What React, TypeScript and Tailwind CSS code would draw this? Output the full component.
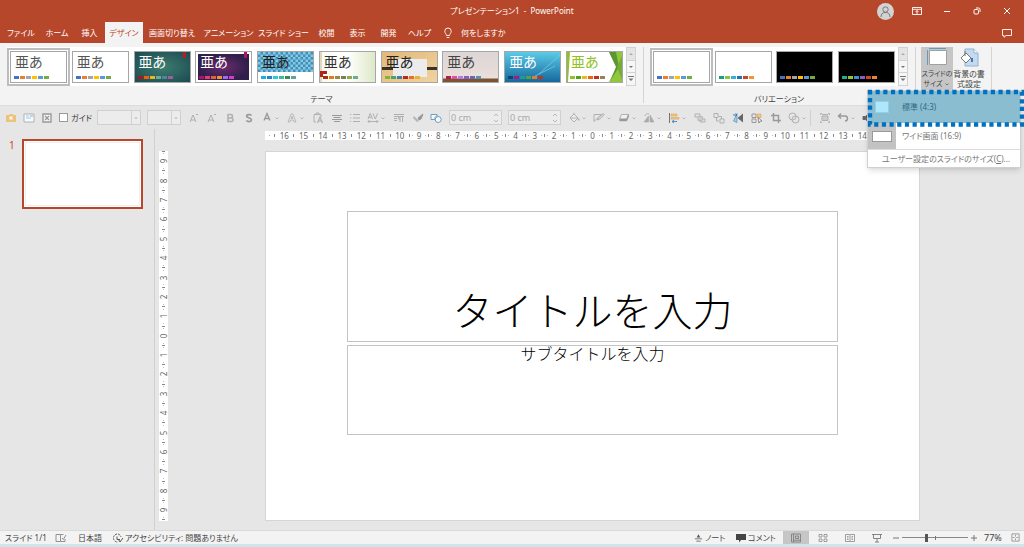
import type { ReactNode } from "react";
import clsx from "clsx";

const OFFICE = ["bg-[#4472c4]", "bg-[#ed7d31]", "bg-[#a5a5a5]", "bg-[#ffc000]", "bg-[#5b9bd5]", "bg-[#70ad47]"];

const tabs = [
  { label: "ファイル", width: "w-[38px]" },
  { label: "ホーム", width: "w-[34px]" },
  { label: "挿入", width: "w-[31px]" },
  { label: "デザイン", width: "w-[38px]", active: true },
  { label: "画面切り替え", width: "w-[58px]" },
  { label: "アニメーション", width: "w-[55px]" },
  { label: "スライド ショー", width: "w-[55px]" },
  { label: "校閲", width: "w-[31px]" },
  { label: "表示", width: "w-[31px]" },
  { label: "開発", width: "w-[31px]" },
  { label: "ヘルプ", width: "w-[31px]" },
];

interface Theme {
  name: string;
  text: string;
  bg: string;
  art?: ReactNode;
  colors: string[];
  selected?: boolean;
}

const themes: Theme[] = [
  { name: "Office テーマ", text: "text-[#555]", bg: "bg-white", colors: OFFICE, selected: true },
  { name: "Office", text: "text-[#555]", bg: "bg-white", colors: OFFICE },
  {
    name: "イオン",
    text: "text-white",
    bg: "bg-radial from-[#3f7d70] to-[#1b4a50]",
    art: <rect x="48" width="3" height="6" fill="#b31f24" />,
    colors: ["bg-[#b01513]", "bg-[#ea6312]", "bg-[#e6b729]", "bg-[#6aac90]", "bg-[#54849a]", "bg-[#9e5e9b]"],
  },
  {
    name: "イオン ボードルーム",
    text: "text-white",
    bg: "bg-white",
    art: (
      <>
        <defs>
          <radialGradient id="board">
            <stop offset="0" stopColor="#6d2a6e" />
            <stop offset="1" stopColor="#2f1f4b" />
          </radialGradient>
        </defs>
        <rect x="2" y="2" width="51" height="26" fill="url(#board)" />
        <rect x="48" width="3" height="6" fill="#b31166" />
      </>
    ),
    colors: ["bg-[#b31166]", "bg-[#e33d6f]", "bg-[#e45f3c]", "bg-[#e9943a]", "bg-[#9b6bf2]", "bg-[#d53dd0]"],
  },
  {
    name: "インテグラル",
    text: "text-[#222]",
    bg: "bg-white",
    art: (
      <>
        <defs>
          <pattern id="check" width="5" height="5" patternUnits="userSpaceOnUse">
            <rect width="5" height="5" fill="#3b93bd" />
            <path d="M0 0h2.5v2.5H0zM2.5 2.5H5V5H2.5z" fill="#8cc6df" />
          </pattern>
        </defs>
        <rect width="56" height="20" fill="url(#check)" />
      </>
    ),
    colors: ["bg-[#1cade4]", "bg-[#2683c6]", "bg-[#27ced7]", "bg-[#42ba97]", "bg-[#3e8853]", "bg-[#62a39f]"],
  },
  {
    name: "オーガニック",
    text: "text-[#333]",
    bg: "bg-linear-to-r from-[#fbfaf3] via-white to-[#dfe8c8]",
    art: (
      <>
        <path d="M1 0v30" stroke="#c5b48c" />
        <path d="M0 19h7v3H3v3H0z" fill="#b02318" />
      </>
    ),
    colors: ["bg-[#a53010]", "bg-[#de7e18]", "bg-[#9f8351]", "bg-[#728653]", "bg-[#92aa4c]", "bg-[#6aac91]"],
  },
  {
    name: "ギャラリー",
    text: "text-[#222]",
    bg: "bg-linear-to-br from-[#e3b878] to-[#f0d3a0]",
    art: (
      <>
        <rect y="15" width="56" height="3" fill="#3a332c" />
        <rect x="11" y="7" width="34" height="18" fill="#ececec" />
      </>
    ),
    colors: ["bg-[#83b23d]", "bg-[#4aa26c]", "bg-[#3f81a6]", "bg-[#b02b22]", "bg-[#e2732b]", "bg-[#e8b13a]"],
  },
  {
    name: "木版活字",
    text: "text-[#444]",
    bg: "bg-linear-to-b from-[#dcd6d4] to-[#ebe0dd]",
    art: (
      <>
        <rect y="27" width="56" height="3" fill="#7b5433" />
        <rect y="26" width="56" height="1" fill="#b09a88" />
      </>
    ),
    colors: ["bg-[#b31d4c]", "bg-[#dd4fa0]", "bg-[#b478f2]", "bg-[#7f62c0]", "bg-[#6b66b0]", "bg-[#5a90ad]"],
  },
  {
    name: "回路",
    text: "text-white",
    bg: "bg-linear-to-b from-[#5ccbe8] to-[#14699c]",
    art: <path d="M34 22 55 3M30 24 50 14" stroke="#7fd0e8" strokeWidth=".7" fill="none" />,
    colors: ["bg-[#16406f]", "bg-[#a31c84]", "bg-[#1c9d8f]", "bg-[#5c9f3c]", "bg-[#e57b2c]", "bg-[#b5352a]"],
  },
  {
    name: "ファセット",
    text: "text-[#90c226]",
    bg: "bg-white",
    art: (
      <>
        <path d="M0 0h3L1 30H0z" fill="#90c226" />
        <path d="M42 0h13v30H42l8-15z" fill="#90c83c" />
        <path d="M42 0h7l3 15-9 14 6-14z" fill="#5d9436" />
        <path d="M50 15 55 4v24z" fill="#74ad35" />
      </>
    ),
    colors: ["bg-[#90c226]", "bg-[#54a021]", "bg-[#e6b91e]", "bg-[#e76618]", "bg-[#c42f1a]", "bg-[#918655]"],
  },
];

const variants: Theme[] = [
  { name: "白 1", text: "", bg: "bg-white", colors: OFFICE, selected: true },
  {
    name: "白 2",
    text: "",
    bg: "bg-white",
    colors: ["bg-[#1b9e84]", "bg-[#8cc63e]", "bg-[#3bb0d6]", "bg-[#2374a8]", "bg-[#c8472b]", "bg-[#f0963a]"],
  },
  { name: "黒 1", text: "", bg: "bg-black", colors: OFFICE },
  {
    name: "黒 2",
    text: "",
    bg: "bg-black",
    colors: ["bg-[#1fae90]", "bg-[#8cc63e]", "bg-[#3a93d0]", "bg-[#8a5cc4]", "bg-[#c8472b]", "bg-[#ef8132]"],
  },
];

const ThemeButton = ({ theme, sample }: { theme: Theme; sample?: boolean }) => (
  <button
    type="button"
    aria-label={theme.name}
    className={clsx(
      "relative flex h-8 w-[57px] flex-col border border-[#a6a6a6] text-left",
      theme.bg,
      theme.selected && "outline-2 outline-offset-1 outline-[#bdbdbd]"
    )}
  >
    {theme.art && (
      <svg viewBox="0 0 55 30" preserveAspectRatio="none" className="absolute inset-0 h-full w-full">
        {theme.art}
      </svg>
    )}
    <span className={clsx("relative block h-6 pl-1 text-[14px] leading-5", theme.text)}>{sample && "亜あ"}</span>
    <span className="relative flex gap-px pl-[3px]">
      {theme.colors.map((c) => (
        <span key={c} className={clsx("h-[3px] w-[5px]", c)} />
      ))}
    </span>
  </button>
);

const GalleryScroll = () => (
  <div className="flex h-[39px] w-[10px] flex-col border border-[#d2d2d2] bg-[#f6f6f6]">
    <button type="button" aria-label="前の行" className="flex flex-1 items-center justify-center bg-[#e4e4e4]">
      <svg viewBox="0 0 6 6" className="size-[6px]"><path d="M1 4 3 2l2 2z" fill="#aaa" /></svg>
    </button>
    <button type="button" aria-label="次の行" className="flex flex-1 items-center justify-center border-y border-[#d2d2d2]">
      <svg viewBox="0 0 6 6" className="size-[6px]"><path d="M1 2h4L3 4z" fill="#777" /></svg>
    </button>
    <button type="button" aria-label="その他" className="flex flex-1 items-center justify-center">
      <svg viewBox="0 0 6 6" className="size-[6px]"><path d="M0 .5h6" stroke="#777" /><path d="M.5 2.500h5L3 5z" fill="#777" /></svg>
    </button>
  </div>
);

const Separator = () => <div className="h-14 w-px bg-[#d4d4d4]" />;

/* 12x12 の小さなアイコン */
const icons: Record<string, ReactNode> = {
  folder: <><path d="M1 3h3l1-1h3v1h3v7H1z" fill="#edc27c" stroke="none" /><path d="M6 4v4M4 6h4M4.600 4.600l2.800 2.800M7.400 4.600 4.600 7.400" stroke="#fff" strokeWidth=".8" /></>,
  slide: <><path d="M1 2h10v8H1z" fill="#f7fbfd" /><path d="M3 4h3M3 6h5" stroke="#9cc8e4" /><path d="M7 3h3v2H7z" fill="#b5d8ee" stroke="none" /></>,
  close: <><path d="M2 2h8v8H2z" fill="#f4f4f4" stroke="#999" strokeWidth="1.400" /><path d="m4 4 4 4M8 4 4 8" stroke="#999" strokeWidth="1.300" /></>,
  grow: <><path d="m2 10 3-7 3 7M3 8h4" /><path d="m8 3 1-1 1 1" /></>,
  shrink: <><path d="m2 10 3-7 3 7M3 8h4" /><path d="m8 2 1 1 1-1" /></>,
  bold: <path d="M4 2.500h2.500q2 0 2 1.700T6.500 6H4zM4 6h3q2 0 2 1.900T7 9.500H4z" strokeWidth="1.500" />,
  shadow: <path d="M8.500 3.500C7 2 3.500 2.200 3.700 4.200S8.700 6 8.500 8 4.800 10 3.300 8.500" strokeWidth="1.700" stroke="#999" />,
  fontColor: <path d="m3 8.500 3-7 3 7M4 6.500h4" strokeWidth="1.300" stroke="#999" />,
  outlineA: <path d="m2 10 3-8h2l3 8H8L7.400 8H4.600L4 10zM5.200 6.500h1.600L6 4z" strokeWidth=".8" />,
  paste: <><path d="M4 10H2V2.500h7V5M4 2.500V1h3v1.500" /><path d="m5.500 11 2.500-6 2.500 6M6.500 9h3" strokeWidth="1.200" /></>,
  align: <path d="M1 3.500h10M2.500 5.500h7M1 7.500h10M3 9.500h6" strokeWidth="1.100" stroke="#999" />,
  list: <path d="M1 2.500h1.200M4 2.500h7M1 6h1.200M4 6h7M1 9.500h1.200M4 9.500h7" />,
  spacing: <><path d="m1 7 2.200-5.500L5.500 7M2 5.300h2.500M6 1.500 8.300 7l2.200-5.500" /><path d="M1 9.500h10M2.500 8 1 9.500 2.500 11M9.500 8 11 9.500 9.500 11" /></>,
  direction: <><path d="M1 2.500h10M1 4.500h5M1 6.500h3M1 8.500h3" /><path d="M7 10V4.500M9.500 10V4.500M11 4.500H7a1.500 1.500 0 0 0 0 3" /></>,
  brush: <><path d="m6 6 5-4-2 5-2 1z" fill="#999" stroke="#999" /><path d="m2 4 5 5-2 1-4-4z" fill="#b5b5b5" stroke="none" /></>,
  shapes: <><path d="M1 2.500h6v5H1z" fill="#f4f9fc" stroke="#6e9fbd" /><path d="M4.500 6 7 3.500 9.500 6 7 8.500z" fill="#f4f9fc" stroke="#6e9fbd" /><circle cx="8.200" cy="7.500" r="3" fill="#f4f9fc" stroke="#6e9fbd" /></>,
  bucket: <><path d="m2 6 4-4 4 4-4 4zM6 2V.8M2.500 6h7" fill="#eee" /><path d="M10.700 6.500v2" strokeWidth="1.600" /></>,
  pen: <><path d="M8 2.500H1v7L9 2" /><path d="m4.500 8 .7-2L10 1.500l1.200 1L6.500 7.300z" fill="#ddd" /></>,
  effect: <><path d="M3.500 2.500h7L8.700 7h-7z" fill="#f1f1f1" /><path d="M1.700 7v2h7L10.500 5V2.500L8.700 7z" fill="#999" stroke="#999" strokeWidth=".5" /></>,
  rotate: <><path d="M5.500 10V4L1 10zM7 10V3l4 7z" fill="#aaa" stroke="#aaa" strokeWidth=".6" /><path d="M2 4a3 3 0 0 1 4-2" /></>,
  alignObj: <><path d="M1.500 1v10" stroke="#777" /><path d="M3 2h6v2H3z" fill="#f2c681" stroke="#d9a55a" strokeWidth=".6" /><path d="M3 5.500h8v1.600H3z" fill="#f2c681" stroke="#d9a55a" strokeWidth=".6" /><path d="M9 9.500H4M6 8 4 9.500 6 11" stroke="#4b94c6" /></>,
  forward: <><path d="M1 2h5v3H1zM6 7h5v3H6z" /><path d="M4 4.500h4.500v4H4z" fill="#ccc" stroke="#bbb" /></>,
  group: <><path d="M1 1.500h4v4H1zM7 7h4v4H7z" /><path d="M5.500 4.500h3V7M3.500 6v3H6" /></>,
  flip: <><path d="M11 1.500v9L5.500 6z" fill="#666" stroke="none" /><path d="M5 1.500v9L1.500 9z" fill="#a7cbe3" stroke="#4b94c6" strokeWidth=".7" /><path d="M1 3h4M3.500 1.500 5 3 3.500 4.500" stroke="#2f7fb8" /></>,
  select: <><path d="M1 2h4v3.500H1zM1 7h4v3.500H1z" stroke="#999" /><path d="M6 2h4v3.500H6z" fill="#f2c681" stroke="#d9a55a" strokeWidth=".6" /><path d="m7 5.500 4 3.500-2 .2L8 11z" fill="#fff" stroke="#777" strokeWidth=".8" /></>,
  crop: <path d="M3.500 1v7.500H11M1 3.500h7.500V11" strokeWidth="1.400" stroke="#999" />,
  merge: <><circle cx="4.500" cy="4.500" r="3.500" /><circle cx="7.500" cy="7.500" r="3.500" /></>,
  fit: <><path d="M1.500 3V1.500H3M9 1.500h1.500V3M10.500 9v1.500H9M3 10.500H1.500V9" /><path d="M3 4h6v4.500H3z" fill="#ccc" /><path d="M3 2.500h6" /></>,
  undo: <path d="M4 1.500 1.500 4 4 6.500M1.500 4H8q2.500 0 2.500 2.500T8 9" strokeWidth="1.400" stroke="#999" />,
  sound: <path d="M1 4.500h2.500L7 1.500v9L3.500 7.500H1zM9 4q1 2 0 4" fill="#666" stroke="#666" />,
};

const Chevron = () => (
  <svg viewBox="0 0 8 8" className="size-2 shrink-0" fill="none" stroke="#b8b8b8">
    <path d="M2.500 3.500 4 5l1.500-1.500" />
  </svg>
);

const Tool = ({ icon, label, menu, wide }: { icon: string; label: string; menu?: boolean; wide?: boolean }) => (
  <button
    type="button"
    aria-label={label}
    className={clsx("flex h-4 shrink-0 items-center justify-center", menu ? "w-[25px]" : wide ? "w-[19px]" : "w-[18px]")}
  >
    <svg viewBox="0 0 12 12" className="size-3 shrink-0" fill="none" stroke="#b0b0b0">
      {icons[icon]}
    </svg>
    {menu && <Chevron />}
  </button>
);

const Combo = ({ label, width }: { label: string; width: string }) => (
  <div className={clsx("relative h-[15px] shrink-0 border border-[#d0d0d0] bg-[#ececec]", width)}>
    <select aria-label={label} className="h-full w-full appearance-none" defaultValue="">
      <option value=""></option>
    </select>
    <span className="pointer-events-none absolute inset-y-0 right-0 flex items-center border-l border-[#d0d0d0]">
      <svg viewBox="0 0 8 8" className="size-2"><path d="M2.500 3.500h3L4 5z" fill="#aaa" /></svg>
    </span>
  </div>
);

const Spin = ({ label }: { label: string }) => (
  <div className="flex h-[15px] w-[53px] shrink-0 items-center border border-[#d0d0d0] bg-[#ececec] pr-[2px]">
    <input aria-label={label} defaultValue="0 cm" className="w-full min-w-0 pl-px text-[9px] text-[#a8a8a8]" />
    <svg viewBox="0 0 6 12" className="h-3 w-[6px] shrink-0" fill="none" stroke="#b8b8b8">
      <path d="m1 4 2-2 2 2M1 8l2 2 2-2" />
    </svg>
  </div>
);

const range = (n: number) => Array.from({ length: n * 2 + 1 }, (_, i) => Math.abs(n - i));

const HorizontalRuler = () => (
  <div className="flex h-[9px] items-center overflow-hidden bg-white text-[8px] leading-none text-[#666]">
    <span className="flex flex-[1_1_0] justify-center"><i className="size-px bg-[#aaa]" /></span>
    <i className="h-[3px] w-px bg-[#888]" />
    {range(16).map((n, i) => (
      <span key={i} className="contents">
        <span className="flex flex-[2_2_0] items-center justify-around">
          {n < 10 && <i className="size-px bg-[#bbb]" />}
          {n}
          {n < 10 && <i className="size-px bg-[#bbb]" />}
        </span>
        <i className="h-[3px] w-px bg-[#888]" />
      </span>
    ))}
    <span className="flex-[1_1_0]" />
  </div>
);

const VerticalRuler = () => (
  <div className="flex w-[9px] flex-col items-center overflow-hidden bg-white text-[8px] leading-none text-[#666]">
    <i className="h-px w-[3px] bg-[#888]" />
    {range(9).map((n, i) => (
      <span key={i} className="contents">
        <span className="flex flex-[1_1_0] flex-col items-center justify-around">
          <i className="size-px bg-[#bbb]" />
          <span className="flex size-2 -rotate-90 items-center justify-center">{n}</span>
          <i className="size-px bg-[#bbb]" />
        </span>
        <i className="h-px w-[3px] bg-[#888]" />
      </span>
    ))}
  </div>
);

const TitleBar = () => (
  <div className="grid h-[22px] grid-cols-[1fr_auto_1fr] items-center">
    <span />
    <h1 className="whitespace-pre">プレゼンテーション1  -  PowerPoint</h1>
    <div className="flex items-center justify-end pr-[2px]">
      <button type="button" aria-label="アカウント" className="mr-2 size-[17px] rounded-full bg-[#d3d3d3]">
        <svg viewBox="0 0 17 17" fill="none" stroke="#777"><circle cx="8.500" cy="6.500" r="2.700" /><path d="M4 14q0-4.500 4.500-4.500T13 14" /></svg>
      </button>
      <button type="button" aria-label="リボンの表示オプション" className="flex w-[30px] justify-center">
        <svg viewBox="0 0 10 10" className="size-[10px]" fill="none" stroke="#fff"><path d="M.5 1.500h9v7h-9zM.5 3.300h9M5 8V4.500M3.500 6 5 4.500 6.500 6" strokeWidth=".9" /></svg>
      </button>
      <button type="button" aria-label="最小化" className="flex w-[30px] justify-center">
        <svg viewBox="0 0 10 10" className="size-[10px]" stroke="#fff"><path d="M2 5.500h6" /></svg>
      </button>
      <button type="button" aria-label="元に戻す (縮小)" className="flex w-[30px] justify-center">
        <svg viewBox="0 0 10 10" className="size-[10px]" fill="none" stroke="#fff"><rect x="2" y="3.500" width="4.500" height="4.500" rx="1" /><path d="M4 2h2.500Q8 2 8 3.500V6" /></svg>
      </button>
      <button type="button" aria-label="閉じる" className="flex w-[30px] justify-center">
        <svg viewBox="0 0 10 10" className="size-[10px]" stroke="#fff"><path d="m2 2 6 6M8 2 2 8" /></svg>
      </button>
    </div>
  </div>
);

const TabBar = () => (
  <nav className="flex h-[21px] items-stretch pl-[2px]">
    {tabs.map((tab) => (
      <button
        key={tab.label}
        type="button"
        className={clsx("shrink-0 whitespace-nowrap text-center", tab.width, tab.active && "bg-[#f3f3f3] text-[#b7472a]")}
      >
        {tab.label}
      </button>
    ))}
    <button type="button" className="ml-2 flex items-center gap-2 whitespace-nowrap">
      <svg viewBox="0 0 10 12" className="h-3 w-[10px]" fill="none" stroke="#fff"><path d="M3.500 8.500C3.500 7 1.800 6.300 1.800 4.200a3.200 3.200 0 0 1 6.400 0C8.200 6.300 6.500 7 6.500 8.500zM3.700 10.500h2.600" strokeWidth=".9" /></svg>
      何をしますか
    </button>
    <button type="button" aria-label="コメント" className="ml-auto mr-3">
      <svg viewBox="0 0 10 10" className="size-[10px]" fill="none" stroke="#fff"><path d="M.5 1.500h9v6H4L2 9.300V7.500H.5z" strokeWidth=".9" /></svg>
    </button>
  </nav>
);

const SizeMenu = () => (
  <div className="absolute top-[43px] -left-[54px] z-10 w-[154px] border border-[#d0d0d0] bg-white text-[#777] shadow-md">
    <button type="button" className="flex h-[32px] w-full items-center bg-[#8abdd0] text-[#2f6a80]">
      <span className="flex w-7 justify-center"><i className="h-3 w-[14px] border border-[#8fd0e8] bg-[#aee6fb]" /></span>
      <span className="pl-[6px]">標準 (4:3)</span>
    </button>
    <button type="button" className="flex h-[26px] w-full items-center">
      <span className="flex h-full w-7 items-center justify-center bg-[#c3c3c3]"><i className="h-[11px] w-5 border border-[#999] bg-white" /></span>
      <span className="pl-[6px]">ワイド画面 (16:9)</span>
    </button>
    <button type="button" className="h-[18px] w-full border-t border-[#ddd] pl-1 text-center whitespace-nowrap">
      ユーザー設定のスライドのサイズ(<u>C</u>)...
    </button>
    {/* 選択中の項目を囲む点線 */}
    <svg className="pointer-events-none absolute -top-[2px] -left-px h-[38px] w-[157px]" viewBox="0 0 157 38" fill="none">
      <rect x="3" y="3" width="152" height="32.500" stroke="#0070c0" strokeWidth="4.400" strokeDasharray="4.200 3.480" strokeDashoffset="2.100" />
    </svg>
  </div>
);

const Ribbon = () => (
  <div className="flex h-[62px] items-start bg-[#f3f3f3] pt-1 pl-[7px] text-[#444]">
    <section className="w-[629px] shrink-0">
      <div className="flex">
        <div className="flex h-[39px] flex-1 items-center justify-between bg-white px-[3px]">
          {themes.map((t) => <ThemeButton key={t.name} theme={t} sample />)}
        </div>
        <GalleryScroll />
      </div>
      <h2 className="mt-[7px] text-center leading-3">テーマ</h2>
    </section>
    <div className="w-[7px]" />
    <Separator />
    <div className="w-[6px]" />
    <section className="w-[258px] shrink-0">
      <div className="flex">
        <div className="flex h-[39px] flex-1 items-center justify-between bg-white px-[3px]">
          {variants.map((t) => <ThemeButton key={t.name} theme={t} />)}
        </div>
        <GalleryScroll />
      </div>
      <h2 className="mt-[7px] text-center leading-3">バリエーション</h2>
    </section>
    <div className="w-[7px]" />
    <Separator />
    <div className="w-[5px]" />
    <div className="relative">
      <button type="button" aria-expanded="true" className="flex h-[45px] w-8 flex-col items-center bg-[#c6c6c6] text-[7px] leading-[10px] whitespace-nowrap">
        <svg viewBox="0 0 22 22" className="size-[22px] shrink-0" fill="none"><path d="M3 1.500h17M1.500 3v15" stroke="#5e9cc5" /><path d="M3.500 3.500h17v14h-17z" fill="#fff" stroke="#a0a0a0" /></svg>
        スライドの
        <span className="flex items-center">サイズ<svg viewBox="0 0 8 8" className="size-2" fill="none" stroke="#777"><path d="M2.500 3.500 4 5l1.500-1.500" /></svg></span>
      </button>
      <SizeMenu />
    </div>
    <button type="button" className="flex h-[45px] w-8 flex-col items-center whitespace-nowrap leading-[10px]">
      <svg viewBox="0 0 22 22" className="size-[22px] shrink-0" fill="none"><path d="M7 2h9l4 4v13H7z" fill="#c5daee" stroke="#8fb4d2" /><path d="M16 2v4h4" fill="#fff" stroke="#8fb4d2" /><path d="m3 11 5-5 5 5-5 5z" fill="#fff" stroke="#777" /><path d="M7 4v5" stroke="#777" /><path d="M14 11v4" stroke="#3f78b5" strokeWidth="2" /></svg>
      背景の書
      <span>式設定</span>
    </button>
    <div className="w-[6px]" />
    <Separator />
  </div>
);

const Toolbar = () => (
  <div className="flex h-6 items-center overflow-hidden border-t border-[#dcdcdc] pl-px">
    <Tool icon="folder" label="開く" wide />
    <Tool icon="slide" label="新しいスライド" />
    <Tool icon="close" label="削除" />
    <label className="ml-[3px] flex w-[38px] shrink-0 items-center gap-[3px] whitespace-nowrap text-[#333]">
      <input type="checkbox" className="size-[9px] shrink-0 appearance-none border border-[#999] bg-white" />
      ガイド
    </label>
    <Combo label="フォント" width="w-11" />
    <div className="w-[6px] shrink-0" />
    <Combo label="サイズ" width="w-[34px]" />
    <div className="w-1 shrink-0" />
    <Tool icon="grow" label="フォント拡大" />
    <Tool icon="shrink" label="フォント縮小" />
    <Tool icon="bold" label="太字" />
    <Tool icon="shadow" label="影" wide />
    <Tool icon="fontColor" label="フォントの色" menu />
    <Tool icon="outlineA" label="文字の輪郭" menu />
    <Tool icon="paste" label="貼り付け" wide />
    <Tool icon="align" label="中央揃え" wide />
    <Tool icon="list" label="箇条書き" />
    <Tool icon="spacing" label="文字の間隔" menu />
    <Tool icon="direction" label="文字列の方向" wide />
    <Tool icon="brush" label="書式のコピー" wide />
    <Tool icon="shapes" label="図形" />
    <div className="w-1 shrink-0" />
    <Spin label="高さ" />
    <div className="w-[6px] shrink-0" />
    <Spin label="幅" />
    <div className="w-1 shrink-0" />
    <Tool icon="bucket" label="塗りつぶし" menu />
    <Tool icon="pen" label="枠線" menu />
    <Tool icon="effect" label="効果" menu />
    <Tool icon="rotate" label="回転" menu />
    <Tool icon="alignObj" label="配置" menu />
    <Tool icon="forward" label="前面へ移動" wide />
    <Tool icon="group" label="グループ化" wide />
    <Tool icon="flip" label="左右反転" wide />
    <Tool icon="select" label="選択" wide />
    <Tool icon="crop" label="トリミング" wide />
    <Tool icon="merge" label="図形の結合" menu />
    <div className="h-4 w-px shrink-0 bg-[#cfcfcf]" />
    <div className="w-1 shrink-0" />
    <Tool icon="fit" label="合わせる" wide />
    <Tool icon="undo" label="元に戻す" menu />
    <Tool icon="sound" label="サウンド" />
  </div>
);

const Slide = () => (
  <div className="aspect-[654/369] w-full border border-[#d5d5d5] bg-white px-[81px] pt-[59px] text-center text-black">
    <div className="flex h-[131px] items-end justify-center border border-[#c4c4c4]">
      <h2 className="text-[40px] leading-[60px] font-light [font-feature-settings:normal]">タイトルを入力</h2>
    </div>
    <div className="mt-[3px] h-[90px] border border-[#c4c4c4]">
      <p className="text-[16px] leading-4 font-light [font-feature-settings:normal]">サブタイトルを入力</p>
    </div>
  </div>
);

const StatusBar = () => (
  <footer className="flex h-[14px] shrink-0 items-center border-t border-[#dadada] bg-[#f3f3f3] pl-[5px] whitespace-nowrap text-[#444]">
    <span className="w-[50px]">スライド 1/1</span>
    <button type="button" aria-label="スペルチェック" className="mr-[11px]">
      <svg viewBox="0 0 12 10" className="h-[10px] w-3" fill="none" stroke="#888"><path d="M1 1.500h4.500v7H1zM5.500 8.500H10V6M5.500 1.500h3M7 5l1.300 1.500L11 2" strokeWidth=".9" /></svg>
    </button>
    <button type="button">日本語</button>
    <button type="button" className="ml-[10px] flex items-center gap-px">
      <svg viewBox="0 0 12 10" className="h-[10px] w-3" fill="none" stroke="#555"><path d="M5 1a4 4 0 1 0 1 8M6 1a4 4 0 0 1 3 3" strokeDasharray="2 1" /><path d="M5 3.500v3h3M6.500 6.500 8 9l3-4" /></svg>
      アクセシビリティ: 問題ありません
    </button>
    <button type="button" className="ml-auto flex w-[42px] items-center gap-[2px]">
      <svg viewBox="0 0 10 10" className="size-[9px]"><path d="M1 6h8v1H1zM2.500 8.500h5v1h-5zM3 5l2-3.500L7 5z" fill="#555" /></svg>
      ノート
    </button>
    <button type="button" className="flex w-[47px] items-center gap-[2px]">
      <svg viewBox="0 0 10 10" className="size-[10px]"><path d="M0 1h10v6H5L3 9.500V7H0z" fill="#444" /></svg>
      コメント
    </button>
    <button type="button" aria-label="標準" className="flex h-[14px] w-[26px] items-center justify-center bg-[#c6c6c6]">
      <svg viewBox="0 0 10 10" className="size-[10px]" fill="none" stroke="#777"><path d="M.5 1h9v8h-9zM2.500 1v8M4.500 3h3v2.500h-3zM2.500 7.200h7" strokeWidth=".8" /></svg>
    </button>
    <button type="button" aria-label="スライド一覧" className="flex w-[27px] justify-center">
      <svg viewBox="0 0 10 10" className="size-[10px]" fill="none" stroke="#888"><path d="M1 1.500h3v2.500H1zM6 1.500h3v2.500H6zM1 6h3v2.500H1zM6 6h3v2.500H6z" strokeWidth=".8" /></svg>
    </button>
    <button type="button" aria-label="閲覧表示" className="flex w-[27px] justify-center">
      <svg viewBox="0 0 10 10" className="size-[10px]" fill="none" stroke="#888"><path d="M.5 1.500h4L5 2l.5-.5h4v7h-4L5 9l-.5-.5h-4zM5 2v7M2 3.500h1.500M2 5h1.500M2 6.500h1.500M6.500 3.500H8M6.500 5H8M6.500 6.500H8" strokeWidth=".8" /></svg>
    </button>
    <button type="button" aria-label="スライド ショー" className="flex w-[27px] justify-center">
      <svg viewBox="0 0 10 10" className="size-[10px]" fill="none" stroke="#777"><path d="M0 1.500h10M1.500 1.500v4h7v-4M5 5.500v3.500M3 9h4" strokeWidth=".9" /></svg>
    </button>
    <button type="button" aria-label="縮小" className="ml-[2px]">
      <svg viewBox="0 0 8 8" className="size-2" stroke="#777"><path d="M1 4h6" /></svg>
    </button>
    <span className="relative mx-[2px] flex w-[66px] items-center">
      <input
        type="range"
        aria-label="ズーム"
        defaultValue={37}
        className="h-2 w-full appearance-none bg-linear-to-r from-[#888] to-[#888] bg-[length:100%_1px] bg-center bg-no-repeat [&::-webkit-slider-thumb]:h-2 [&::-webkit-slider-thumb]:w-[3px] [&::-webkit-slider-thumb]:appearance-none [&::-webkit-slider-thumb]:bg-[#555]"
      />
      <i className="absolute left-1/2 h-[4px] w-px bg-[#777]" />
    </span>
    <button type="button" aria-label="拡大">
      <svg viewBox="0 0 8 8" className="size-2" stroke="#777"><path d="M1 4h6M4 1v6" /></svg>
    </button>
    <button type="button" className="ml-[6px] w-[27px] text-left text-[9px]">77%</button>
    <button type="button" aria-label="ウィンドウに合わせる" className="mr-1">
      <svg viewBox="0 0 10 10" className="size-[9px]" fill="none" stroke="#888"><path d="M1 1h8v8H1zM5 2v2M5 6v2M2 5h2M6 5h2" strokeWidth=".9" /></svg>
    </button>
  </footer>
);

export default function App() {
  return (
    <div className="flex min-h-screen flex-col overflow-hidden bg-[#e6e6e6] font-['Noto_Sans','Noto_Sans_CJK_JP',sans-serif] text-[8px] leading-3 [font-feature-settings:'palt']">
      <header className="bg-[#b7472a] text-white">
        <TitleBar />
        <TabBar />
      </header>
      <Ribbon />
      <Toolbar />
      <main className="flex flex-1">
        <aside className="flex w-[155px] shrink-0 items-start border-r border-[#d0d0d0] pt-[10px] pl-[9px]">
          <span className="w-[13px] text-[10px] leading-3 text-[#c8472b]">1</span>
          <button type="button" aria-label="スライド 1" className="h-[70px] w-[121px] border-2 border-[#b7472a] bg-white p-px">
            <span className="block h-full border border-[#eee]" />
          </button>
        </aside>
        <div className="flex flex-1 flex-col pt-[2px] pl-1">
          <div className="mr-[104px] ml-[106px]">
            <HorizontalRuler />
          </div>
          <div className="mt-[11px] mr-[104px] flex gap-[97px]">
            <VerticalRuler />
            <div className="min-w-0 flex-1">
              <Slide />
            </div>
          </div>
        </div>
      </main>
      <StatusBar />
      <div className="h-[3px] bg-[#cde6ec]" />
    </div>
  );
}
